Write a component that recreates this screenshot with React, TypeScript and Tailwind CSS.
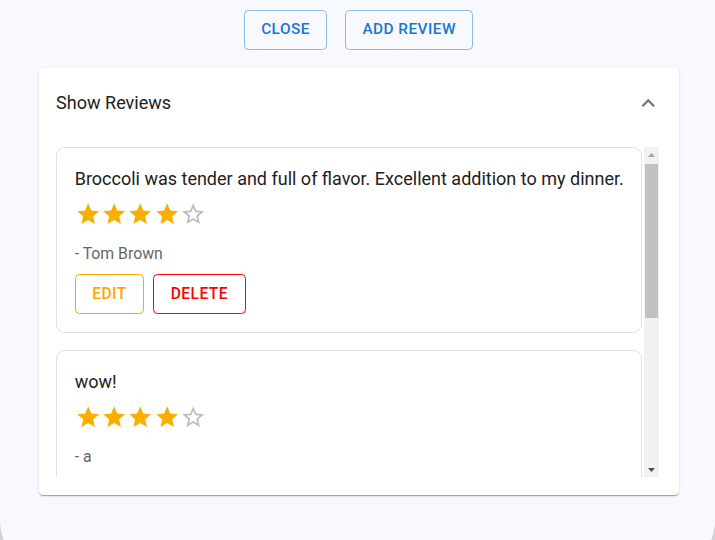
import React from "react";

const STAR = "M12 17.27L18.18 21l-1.64-7.03L22 9.24l-7.19-.61L12 2 9.19 8.63 2 9.24l5.46 4.73L5.82 21z";
const STAR_BORDER =
  "M22 9.24l-7.19-.62L12 2 9.19 8.63 2 9.24l5.46 4.73L5.82 21 12 17.27 18.18 21l-1.63-7.03L22 9.24zM12 15.4l-3.76 2.27 1-4.28-3.32-2.88 4.38-.38L12 6.1l1.71 4.04 4.38.38-3.32 2.88 1 4.28L12 15.4z";

function Stars({ value }: { value: number }) {
  return (
    <div className="flex mt-[8.8px] h-[26.4px]">
      {[1, 2, 3, 4, 5].map((i) => (
        <svg key={i} width="26.4" height="26.4" viewBox="0 0 24 24" className="shrink-0">
          {i <= value ? (
            <path d={STAR} fill="#faaf00" />
          ) : (
            <path d={STAR_BORDER} fill="#bdbdbd" />
          )}
        </svg>
      ))}
    </div>
  );
}

function Review({ text, author, rating }: { text: string; author: string; rating: number }) {
  return (
    <div className="border border-[#e0e0e0] rounded-[8.8px] p-[17.6px] mb-[17.6px] bg-white">
      <p className="text-[18px] leading-[26.4px] text-[#212121] whitespace-nowrap">{text}</p>
      <Stars value={rating} />
      <p className="mt-[15.5px] text-[15.8px] leading-[22px] text-[#666666]">{author}</p>
      <div className="flex gap-[9px] mt-[9.6px]">
        <button className="h-[39.5px] px-[16.5px] border border-[#ffa500] rounded-[4.4px] text-[#ffa500] text-[15.6px] font-medium tracking-[0.45px] uppercase">
          Edit
        </button>
        <button className="h-[39.5px] px-[16.5px] border border-[#ff0000] rounded-[4.4px] text-[#ff0000] text-[15.6px] font-medium tracking-[0.45px] uppercase">
          Delete
        </button>
      </div>
    </div>
  );
}

export default function App() {
  return (
    <div className="w-[715px] h-[540px] overflow-hidden bg-[#d4d4d6]" style={{ fontFamily: "Roboto, 'Liberation Sans', sans-serif" }}>
      <div className="h-[572px] bg-[#f8f9fe] rounded-b-[52px] pl-[2px] flex flex-col items-center">
        <div className="flex gap-[17.6px] pt-[10px]">
          <button className="h-[39.5px] px-[16.5px] border border-[#8cbae9] rounded-[4.4px] text-[#1976d2] text-[15.4px] font-medium tracking-[0.44px] uppercase">
            Close
          </button>
          <button className="h-[39.5px] px-[16.5px] border border-[#8cbae9] rounded-[4.4px] text-[#1976d2] text-[15.4px] font-medium tracking-[0.44px] uppercase">
            Add Review
          </button>
        </div>
        <div className="mt-[18.5px] w-[640px] bg-white rounded-[4.4px] shadow-[0_2px_1px_-1px_rgba(0,0,0,0.2),0_1px_1px_0_rgba(0,0,0,0.14),0_1px_3px_0_rgba(0,0,0,0.12)]">
          <div className="h-[70.4px] pl-[17.6px] pr-[17.6px] flex items-center justify-between">
            <span className="text-[18.05px] leading-[26.4px] text-[#212121]">Show Reviews</span>
            <svg width="26.4" height="26.4" viewBox="0 0 24 24">
              <path d="M12 8l-6 6 1.41 1.41L12 10.83l4.59 4.58L18 14z" fill="#757575" />
            </svg>
          </div>
          <div className="pt-[8.8px] pl-[17.6px] pr-[19.5px] pb-[17.6px]">
            <div className="h-[330px] flex">
              <div className="flex-1 overflow-hidden pr-[2px]">
                <Review
                  text="Broccoli was tender and full of flavor. Excellent addition to my dinner."
                  author="- Tom Brown"
                  rating={4}
                />
                <Review text="wow!" author="- a" rating={4} />
              </div>
              <div className="w-[15px] bg-[#f1f1f1] flex flex-col">
                <div className="h-[15px] flex items-center justify-center">
                  <svg width="7" height="4" viewBox="0 0 7 4">
                    <path d="M3.5 0L7 4H0z" fill="#a3a3a3" />
                  </svg>
                </div>
                <div className="mt-[2px] mx-[1px] h-[154px] bg-[#c1c1c1]" />
                <div className="flex-1" />
                <div className="h-[15px] flex items-center justify-center">
                  <svg width="7" height="4" viewBox="0 0 7 4">
                    <path d="M0 0h7L3.5 4z" fill="#505050" />
                  </svg>
                </div>
              </div>
            </div>
          </div>
        </div>
      </div>
    </div>
  );
}
